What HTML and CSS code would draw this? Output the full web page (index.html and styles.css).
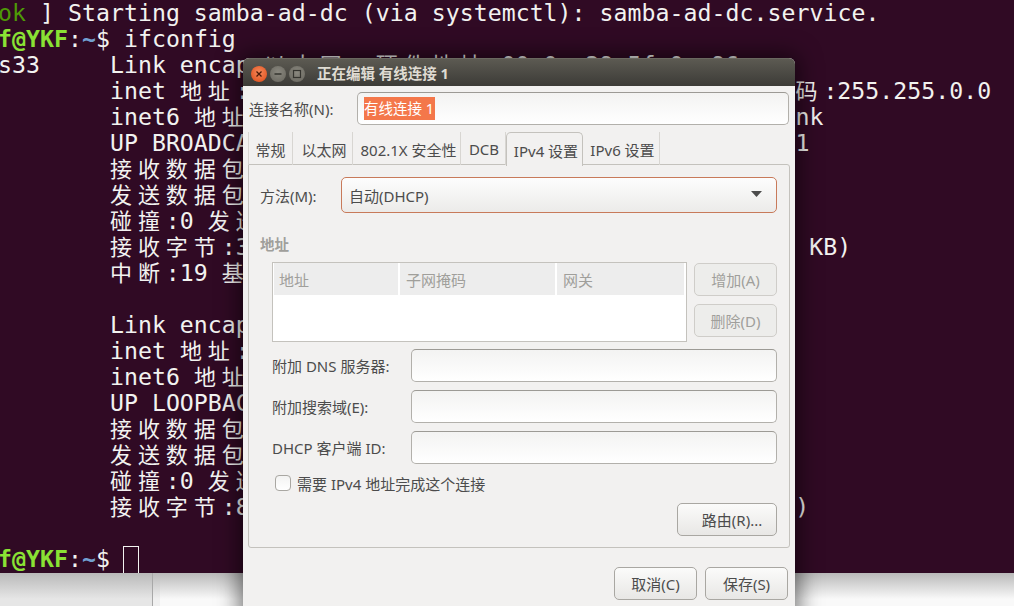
FILE: index.html
```html
<!DOCTYPE html>
<html lang="zh-CN">
<head>
<meta charset="utf-8">
<title>正在编辑 有线连接 1</title>
<link rel="stylesheet" href="styles.css">
</head>
<body>
<div class="desktop">
  <div class="terminal">
    <div class="line"><span class="ok">ok</span> ] Starting samba-ad-dc (via systemctl): samba-ad-dc.service.</div>
    <div class="line"><span class="prompt">f@YKF</span>:<span class="path">~</span>$ ifconfig</div>
    <div class="line">s33     Link encap:<span class="c">以太网</span>  <span class="c">硬件地址</span> 00:0c:29:5f:0c:96</div>
    <div class="line">        inet <span class="c">地址</span>:                                       <span class="c">码</span>:255.255.0.0</div>
    <div class="line">        inet6 <span class="c">地址</span>:                                      nk</div>
    <div class="line">        UP BROADCAST                                     1</div>
    <div class="line">        <span class="c">接收数据包</span></div>
    <div class="line">        <span class="c">发送数据包</span></div>
    <div class="line">        <span class="c">碰撞</span>:0 <span class="c">发送</span></div>
    <div class="line">        <span class="c">接收字节</span>:3                                        KB)</div>
    <div class="line">        <span class="c">中断</span>:19 <span class="c">基本</span></div>
    <div class="line"> </div>
    <div class="line">        Link encap</div>
    <div class="line">        inet <span class="c">地址</span>:</div>
    <div class="line">        inet6 <span class="c">地址</span>:</div>
    <div class="line">        UP LOOPBACK</div>
    <div class="line">        <span class="c">接收数据包</span></div>
    <div class="line">        <span class="c">发送数据包</span></div>
    <div class="line">        <span class="c">碰撞</span>:0 <span class="c">发送</span></div>
    <div class="line">        <span class="c">接收字节</span>:8                                       )</div>
    <div class="line"> </div>
    <div class="line"><span class="prompt">f@YKF</span>:<span class="path">~</span>$ <span class="cursor"></span></div>
  </div>
  <div class="under">
    <div class="under-left"></div>
    <div class="under-mid"></div>
    <div class="under-right"></div>
  </div>

  <div class="dialog">
    <div class="titlebar">
      <div class="winbtns">
        <span class="winbtn close"><svg width="16" height="16" viewBox="0 0 16 16"><path d="M5.5 5.5l5 5M10.5 5.5l-5 5" stroke="#4a1a08" stroke-width="1.3" fill="none"/></svg></span>
        <span class="winbtn"><svg width="16" height="16" viewBox="0 0 16 16"><path d="M4.5 8h7" stroke="#35342f" stroke-width="1.3" fill="none"/></svg></span>
        <span class="winbtn"><svg width="16" height="16" viewBox="0 0 16 16"><rect x="4.5" y="4.5" width="7" height="7" stroke="#35342f" stroke-width="1.2" fill="none"/></svg></span>
      </div>
      <div class="wintitle">正在编辑 有线连接 1</div>
    </div>
    <div class="body">
      <div class="name-row">
        <label class="name-label">连接名称(N):</label>
        <div class="entry name-entry"><span class="selected">有线连接 1</span></div>
      </div>
      <div class="tabs">
        <div class="tab t1">常规</div>
        <div class="tab t2">以太网</div>
        <div class="tab t3">802.1X 安全性</div>
        <div class="tab t4">DCB</div>
        <div class="tab active">IPv4 设置</div>
        <div class="tab t6">IPv6 设置</div>
      </div>
      <div class="page">
        <div class="method-row">
          <label class="method-label">方法(M):</label>
          <div class="combo"><span>自动(DHCP)</span><svg class="arrow" width="11" height="6" viewBox="0 0 11 6"><path d="M0 0h11L5.5 6z" fill="#4c4c4c"/></svg></div>
        </div>
        <div class="section-title">地址</div>
        <div class="addr-row">
          <div class="table">
            <div class="thead">
              <div class="th th1">地址</div>
              <div class="th th2">子网掩码</div>
              <div class="th th3">网关</div>
            </div>
          </div>
          <div class="side-btns">
            <div class="btn disabled">增加(A)</div>
            <div class="btn disabled">删除(D)</div>
          </div>
        </div>
        <div class="field-row"><label class="field-label">附加 DNS 服务器:</label><div class="entry field"></div></div>
        <div class="field-row"><label class="field-label">附加搜索域(E):</label><div class="entry field"></div></div>
        <div class="field-row"><label class="field-label">DHCP 客户端 ID:</label><div class="entry field"></div></div>
        <div class="check-row"><span class="checkbox"></span><span>需要 IPv4 地址完成这个连接</span></div>
        <div class="route-row"><div class="btn route">路由(R)...</div></div>
      </div>
      <div class="actions">
        <div class="btn action">取消(C)</div>
        <div class="btn action">保存(S)</div>
      </div>
    </div>
  </div>
</div>
</body>
</html>
```

FILE: styles.css
```css
* { box-sizing: border-box; }
html, body { margin: 0; padding: 0; height: 100%; overflow: hidden; }
.desktop {
  position: relative;
  width: 1014px;
  height: 606px;
  overflow: hidden;
  background: #fff;
}
.terminal {
  height: 573px;
  margin-left: -2px;
  background: #300a24;
  color: #f2f2f0;
  font-family: "DejaVu Sans Mono", "Noto Sans CJK SC", monospace;
  font-size: 23.2px;
  letter-spacing: 0.03px;
}
.line { height: 26px; line-height: 26px; white-space: pre; }
.c {
  font-family: "Noto Sans CJK SC", sans-serif;
  font-size: 22px;
  line-height: 0;
  letter-spacing: 5.96px;
}
.ok { color: #4e9a06; }
.prompt { color: #8ae234; font-weight: bold; }
.path { color: #729fcf; font-weight: bold; }
.cursor {
  display: inline-block;
  width: 16px;
  height: 28px;
  margin-left: -1px;
  border: 1.5px solid #f2f2f0;
  vertical-align: -7px;
}
.under { display: flex; height: 33px; }
.under-left { width: 153px; background-color: #e6e6e6; border-right: 1px solid #a8a8a8; }
.under-mid { width: 7px; background-color: #f0f0f0; }
.under-right { flex: 1; background-color: #f9f9f9; }
.under-left, .under-mid, .under-right { background-image: linear-gradient(#b9b9b9, rgba(255,255,255,0) 26px); }

.dialog {
  position: absolute;
  left: 243px;
  top: 58px;
  width: 552px;
  height: 560px;
  background: #f2f1f0;
  border-radius: 6px 6px 0 0;
  box-shadow: 0 0 22px 4px rgba(0,0,0,.55);
  font-family: "Noto Sans", "Noto Sans CJK SC", sans-serif;
  font-size: 15px;
  color: #4c4c4c;
  overflow: hidden;
}
.titlebar {
  height: 28px;
  display: flex;
  align-items: center;
  background: linear-gradient(#5c5a52, #3c3b37);
  border-top: 1px solid #6a6860;
}
.winbtns { display: flex; gap: 3px; margin-left: 8px; margin-top: 2px; }
.winbtn {
  width: 16px;
  height: 16px;
  border-radius: 50%;
  background: radial-gradient(circle at 50% 40%, #8a887f, #66645c);
  display: block;
  line-height: 0;
}
.winbtn.close { background: radial-gradient(circle at 50% 40%, #f58a5c, #dd4814); }
.wintitle {
  margin-left: 12px;
  color: #dfdbd2;
  font-weight: bold;
  font-size: 14.5px;
  white-space: nowrap;
}
.body { padding: 6px 5px 0; }
.name-row { display: flex; align-items: center; height: 33px; }
.name-label { width: 109px; padding-left: 1px; white-space: nowrap; }
.entry {
  height: 33px;
  border: 1px solid #b2b0ab;
  border-top-color: #9c9a95;
  border-radius: 5px;
  background: linear-gradient(#f3f3f2, #fff);
}
.name-entry {
  width: 432px;
  padding: 4px 6px;
  line-height: 23px;
  font-size: 14.5px;
}
.selected { display: inline-block; height: 23px; background: #f4774a; color: #fff; padding-right: 1px; }
.tabs { display: flex; height: 33px; margin-top: 7px; position: relative; }
.tab {
  padding: 1px 0 0 3px;
  display: flex;
  align-items: center;
  justify-content: center;
  border-right: 1px solid #d8d6d2;
  white-space: nowrap;
}
.t1 { width: 45px; padding-left: 0; border-left: 1px solid #d8d6d2; }
.t2 { width: 60px; }
.t3 { width: 108px; padding-left: 4px; }
.t4 { width: 45px; padding-left: 2px; }
.tab.active {
  width: 77px;
  padding-left: 3px;
  background: #f2f1f0;
  border: 1px solid #c4c2bd;
  border-bottom: 0;
  border-radius: 5px 5px 0 0;
  height: 34px;
  z-index: 1;
}
.t6 { width: 77px; }
.page {
  width: 542px;
  height: 384px;
  margin-top: -1px;
  padding: 12px 11px 0;
  border: 1px solid #c4c2bd;
  border-radius: 0 3px 3px 3px;
}
.method-row { display: flex; align-items: center; height: 36px; }
.method-label { width: 81px; }
.combo {
  width: 436px;
  height: 36px;
  display: flex;
  align-items: center;
  justify-content: space-between;
  padding: 0 14px 0 7px;
  border: 1px solid #c87a5a;
  border-radius: 5px;
  background: linear-gradient(#fdfdfd, #ecebe9);
}
.arrow { margin-top: -2px; }
.section-title { margin-top: 22px; height: 19px; line-height: 19px; color: #a09f9b; font-weight: bold; font-size: 14.5px; }
.addr-row { display: flex; gap: 7px; margin-top: 8px; margin-left: 12px; }
.table { width: 415px; height: 80px; border: 1px solid #c4c2bd; background: #fff; padding: 0 1px; }
.thead { display: flex; gap: 2px; height: 32px; }
.th { background: #ededed; color: #a09f9b; display: flex; align-items: center; padding-left: 6px; }
.th1 { width: 124px; padding-left: 5px; }
.th2 { width: 155px; }
.th3 { width: 127px; }
.side-btns { display: flex; flex-direction: column; gap: 8px; margin-top: 1px; }
.btn {
  width: 83px;
  height: 33px;
  display: flex;
  align-items: center;
  justify-content: center;
  border: 1px solid #a9a7a2;
  border-radius: 5px;
  background: linear-gradient(#fbfbfa, #e8e7e5);
  white-space: nowrap;
}
.btn.disabled { border-color: #cfcdc9; background: #ededeb; color: #a09f9b; }
.field-row { display: flex; align-items: center; height: 33px; margin-top: 8px; margin-left: 12px; }
.addr-row + .field-row { margin-top: 7px; }
.field-label { width: 139px; white-space: nowrap; }
.field { width: 366px; }
.check-row { display: flex; align-items: center; gap: 6px; height: 20px; margin-top: 9px; margin-left: 15px; }
.checkbox { width: 16px; height: 16px; border: 1px solid #a9a7a2; border-radius: 4px; background: linear-gradient(#f3f3f2, #fff); }
.route-row { display: flex; justify-content: flex-end; margin-top: 10px; padding-right: 1px; }
.btn.route { width: 100px; padding-left: 10px; }
.actions { display: flex; justify-content: flex-end; gap: 8px; margin-top: 19px; padding-right: 2px; }
```
